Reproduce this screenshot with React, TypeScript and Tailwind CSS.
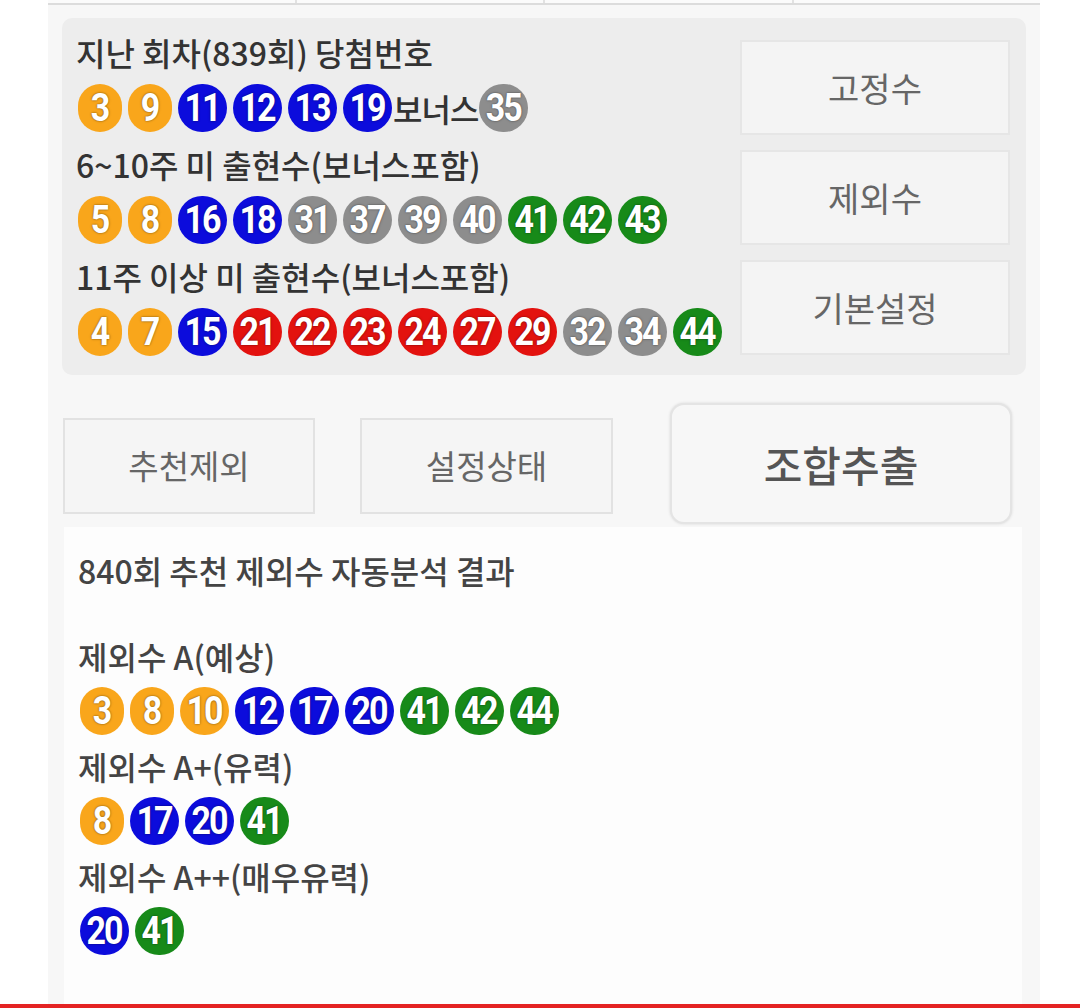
import React from "react";

const FONT = "font-['Noto_Sans_CJK_KR','Noto_Sans',sans-serif]";

function ballColor(n: number) {
  if (n <= 10) return "bg-[#f9a61b]";
  if (n <= 20) return "bg-[#0c0cdc]";
  if (n <= 30) return "bg-[#e3120f]";
  if (n <= 40) return "bg-[#8d8d8d]";
  return "bg-[#178a19]";
}

function Ball({ n }: { n: number }) {
  return (
    <span
      className={`inline-flex h-[48px] shrink-0 items-center justify-center rounded-full font-['Roboto',sans-serif] text-[34px] leading-none font-bold tracking-[-2px] text-white [text-shadow:0_0_2px_rgba(0,0,0,0.6)] ${
        n < 10 ? "w-[44px]" : "w-[49px]"
      } ${ballColor(n)}`}
    >
      <span className="inline-block scale-y-[1.12] pr-[1px]">{n}</span>
    </span>
  );
}

function BallRow({ nums, children }: { nums: number[]; children?: React.ReactNode }) {
  return (
    <div className="flex h-[56px] items-center gap-[6px] pl-[2px]">
      {nums.map((n) => (
        <Ball key={n} n={n} />
      ))}
      {children}
    </div>
  );
}

function SideButton({ label }: { label: string }) {
  return (
    <div className="flex h-[95px] items-center justify-center border-2 border-[#e6e6e6] bg-[#f4f4f4] text-[34px] text-[#666666]">
      {label}
    </div>
  );
}

const LAST_DRAW = [3, 9, 11, 12, 13, 19];
const MISS_6_10 = [5, 8, 16, 18, 31, 37, 39, 40, 41, 42, 43];
const MISS_11 = [4, 7, 15, 21, 22, 23, 24, 27, 29, 32, 34, 44];

const RESULTS = [
  { label: "제외수 A(예상)", nums: [3, 8, 10, 12, 17, 20, 41, 42, 44] },
  { label: "제외수 A+(유력)", nums: [8, 17, 20, 41] },
  { label: "제외수 A++(매우유력)", nums: [20, 41] },
];

export default function App() {
  return (
    <div className={`flex h-[1008px] w-[1080px] flex-col bg-white ${FONT}`}>
      <div className="flex flex-1 pl-[48px]">
        <div className="flex w-[992px] flex-col bg-[#f7f7f7]">
          {/* tab strip cut off at the top */}
          <div className="flex h-[5px] border-b-2 border-[#dcdcdc] bg-[#fbfbfb]">
            <div className="flex-1 border-r-2 border-[#e2e2e2]" />
            <div className="flex-1 border-r-2 border-[#e2e2e2]" />
            <div className="flex-1 border-r-2 border-[#e2e2e2]" />
            <div className="flex-1" />
          </div>

          <div className="px-[14px] pt-[13px]">
            <div className="flex rounded-[10px] bg-[#ededed] pt-[6px] pr-[16px] pb-[15px] pl-[14px]">
              <div className="flex-1 text-[32px] leading-none font-medium text-[#333333]">
                <div className="flex h-[56px] items-center">지난 회차(839회) 당첨번호</div>
                <BallRow nums={LAST_DRAW}>
                  <span className="mx-[-5px] tracking-[-1px]">보너스</span>
                  <Ball n={35} />
                </BallRow>
                <div className="flex h-[56px] items-center">6~10주 미 출현수(보너스포함)</div>
                <BallRow nums={MISS_6_10} />
                <div className="flex h-[56px] items-center">11주 이상 미 출현수(보너스포함)</div>
                <BallRow nums={MISS_11} />
              </div>
              <div className="flex w-[270px] flex-col gap-[15px] pt-[16px]">
                <SideButton label="고정수" />
                <SideButton label="제외수" />
                <SideButton label="기본설정" />
              </div>
            </div>
          </div>

          <div className="mt-[28px] flex items-start pl-[15px]">
            <div className="mt-[15px] flex h-[96px] w-[252px] items-center justify-center border-2 border-[#e2e2e2] bg-[#f5f5f5] text-[33px] text-[#666666]">
              추천제외
            </div>
            <div className="mt-[15px] ml-[45px] flex h-[96px] w-[253px] items-center justify-center border-2 border-[#e2e2e2] bg-[#f5f5f5] text-[33px] text-[#666666]">
              설정상태
            </div>
            <div className="ml-[57px] flex h-[121px] w-[342px] items-center justify-center rounded-[14px] border-2 border-[#e4e4e4] bg-[#f7f7f7] text-[42px] font-medium text-[#555555] shadow-[0_0_3px_rgba(0,0,0,0.12)]">
              조합추출
            </div>
          </div>

          <div className="mt-[3px] ml-[16px] w-[958px] flex-1 bg-[#fdfdfd] pt-[15px] pl-[14px] text-[32px] leading-none font-medium text-[#444444]">
            <div className="flex h-[55px] items-center">840회 추천 제외수 자동분석 결과</div>
            <div className="h-[31px]" />
            {RESULTS.map((r) => (
              <div key={r.label}>
                <div className="flex h-[55px] items-center">{r.label}</div>
                <div className="flex h-[55px] items-center gap-[6px] pl-[2px]">
                  {r.nums.map((n) => (
                    <Ball key={n} n={n} />
                  ))}
                </div>
              </div>
            ))}
          </div>
        </div>
      </div>
      <div className="h-[4px] bg-[#e42323]" />
    </div>
  );
}
